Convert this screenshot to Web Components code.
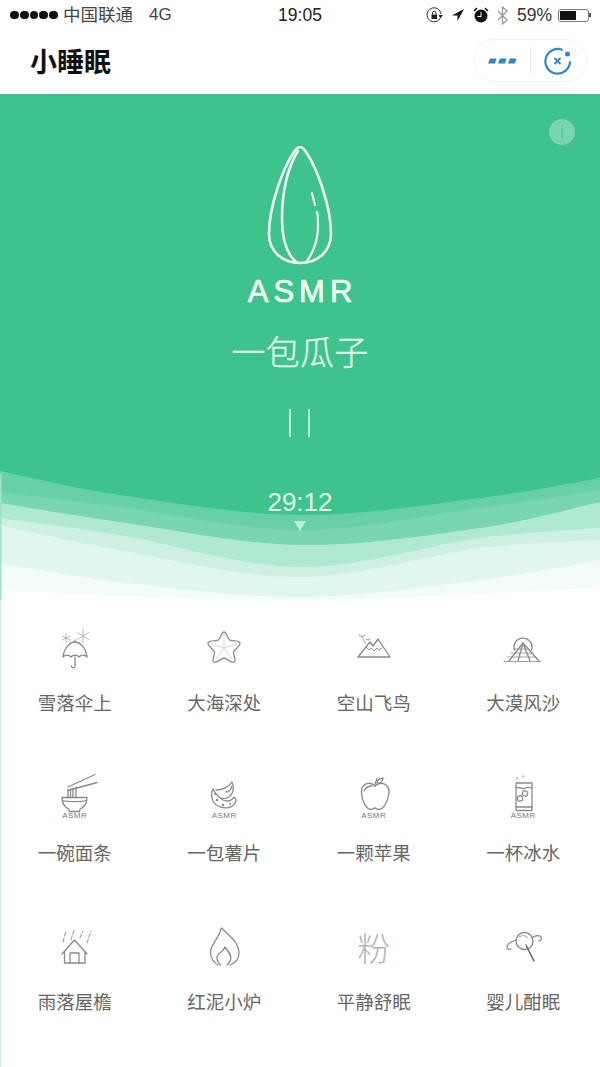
<!DOCTYPE html>
<html lang="zh">
<head>
<meta charset="utf-8">
<title>小睡眠</title>
<style>
  html, body { margin: 0; padding: 0; background: #fff; }
  body {
    width: 600px;
    height: 1067px;
    overflow: hidden;
    font-family: "Liberation Sans", "Noto Sans CJK SC", sans-serif;
    display: flex;
    flex-direction: column;
  }
</style>
</head>
<body>
<status-bar></status-bar>
<nav-bar>小睡眠</nav-bar>
<player-hero name="一包瓜子" time="29:12"></player-hero>
<sound-grid>
  <sound-item label="雪落伞上" icon="umbrella"></sound-item>
  <sound-item label="大海深处" icon="star"></sound-item>
  <sound-item label="空山飞鸟" icon="mountain"></sound-item>
  <sound-item label="大漠风沙" icon="desert"></sound-item>
  <sound-item label="一碗面条" icon="noodles"></sound-item>
  <sound-item label="一包薯片" icon="chips"></sound-item>
  <sound-item label="一颗苹果" icon="apple"></sound-item>
  <sound-item label="一杯冰水" icon="water"></sound-item>
  <sound-item label="雨落屋檐" icon="house"></sound-item>
  <sound-item label="红泥小炉" icon="flame"></sound-item>
  <sound-item label="平静舒眠" icon="pink"></sound-item>
  <sound-item label="婴儿酣眠" icon="rattle"></sound-item>
</sound-grid>
<script>
const ICONS = {
  umbrella: `<path d="M18 31c1-9 7-15 12-15s11 6 12 15c-2-2.500-6-2.500-8 0-2-2.500-6-2.500-8 0-2-2.500-6-2.500-8 0z"/><path d="M30 14v2M30 31v9c0 2.500-3.500 2.500-3.500 0"/>
    <g stroke-width=".8" stroke="#aaa"><path d="M21 7.500v9M17 10l8 4M25 10l-8 4"/><path d="M38 3v14M32 6.500l12 7M44 6.500l-12 7"/></g>`,
  star: `<path d="M30 6c2 0 4 7 5.500 8s9.500.5 10.500 3-6 7-6.500 9 3 8 1 10-8.500-4-10.500-4-8.500 6-10.500 4 1.500-8 1-10-7.500-6.500-6.500-9 9-2 10.500-3 3.500-8 5.500-8z"/>
    <path stroke="#bbb" stroke-dasharray="1 1.500" stroke-width=".8" d="M30 9v13M30 22l8 11M30 22l-8 11M30 22l13-4M30 22l-13-4"/>`,
  mountain: `<path d="M14 31l12-15 3 4 5-7 12 18z"/><path d="M22 21l3 3 2-2 3 3 3-3 2 2 3-2" stroke-width=".9"/>
    <path d="M15 9l3 2 3-2M22 13l2 1 2-1" stroke-width=".9"/><path d="M18 11l4 7" stroke-width=".7"/>`,
  desert: `<path d="M21.500 24a9 9 0 1 1 17 0"/><path d="M16 35l14-18 16 18"/><path d="M25 35l5-18 7 18"/>
    <path stroke-width=".8" d="M11 35.500h37M14 31h29M18 27h22M21 23h15"/>`,
  noodles: `<path d="M17 21.500h25c0 6-3.500 10-7 11.500l-.5 2.500h-10l-.5-2.500c-3.500-1.500-7-5.500-7-11.500z"/><path d="M18 24.500c4 1.500 19 1.500 23 0"/>
    <path d="M23 11L50 -1.500M23 14.500L52 6.500"/><path d="M23 14v7.500M25.500 13v8.500M28 12v9.500M31 11v10.500"/>`,
  chips: `<path d="M19 13c-3 6-1 14 5 17 6 3 15 3 18-5 0-1-1-3-2-4-2 4-7 5-11 3-5-3-8-7-10-11z"/>
    <path d="M22 14c6 0 13-3 16-8 3 6 1 12-3 15-3 2-5 2-7 1"/><path d="M32 16c3 0 5-3 6-6"/>
    <g stroke="none" fill="currentColor"><circle cx="23" cy="24" r="1.300"/><circle cx="29" cy="29" r="1.300"/><circle cx="36" cy="28" r="1"/><circle cx="21" cy="18" r="1"/></g>`,
  apple: `<path d="M31 10C26 5 17 7 17.500 17 18 26 23 33.500 27 33.500c2 0 2.500-1.500 4-1.500s2 1.500 4 1.500c4 0 9-7.500 10-16.500.5-10-9-12-14-7z"/>
    <path d="M31 10c0-3 1-5 2-7.500"/><path d="M33 7c0-3 3-5 6-5 0 3-2 6-6 5z"/><path d="M20 15c2-4 5-5 8-5"/>`,
  water: `<path d="M23 7h16v27.500H23z"/><path d="M23 31h16"/><path d="M23 12c4-2 6 2 9 0 2-1 4-1 7 0"/>
    <rect x="29.500" y="15" width="5" height="5" rx="1.500" transform="rotate(20 32 17.500)"/><rect x="24.500" y="20" width="5" height="5" rx="1.500" transform="rotate(-15 27 22.500)"/>
    <path d="M24 2v.5M30 0v.5" stroke-width="1.300"/>`,
  house: `<path d="M17 29l12.500-14L42 29M19.500 27v11H40V27"/><path d="M25 38v-10h9v10"/>
    <path stroke-width=".9" stroke-dasharray="4 2" d="M18 17l3-11M26 15l3-10M35 13l3-7M42 18l4-12"/>`,
  flame: `<path d="M24 40c-4-2-7.500-7-7.500-13 0-7 7.500-12 11-24C35 10 45 18 45 28c0 6-4 10-9 12"/>
    <path d="M26.500 40c-4.500-4-4.500-10-.5-12 2-1 3-2 5-6 4 5 7 9 5.500 13-.5 2-2.500 4-3.500 5"/>`,
  rattle: `<circle cx="31.500" cy="16" r="8.500"/><path d="M33 20l8 16" stroke-width="1.500" stroke="#666"/><path d="M26 12c3-2 7-2 9 1" stroke-width=".8"/><path d="M23 15c-3 1-9 3-9 7 0 2 2 3 4 2"/><path d="M39 13c3-3 8-3 9-1s0 4-2 4"/>`
};

const TAGGED = ['noodles', 'chips', 'apple', 'water'];

// smooth curve through the five heights measured along the wave
function waveBottom(ys) {
  const xs = [0, 120, 300, 480, 600];
  const pts = xs.map((x, i) => [x, ys[i]]);
  let d = `M0 0H600V${ys[4]}`;
  for (let i = 4; i > 0; i--) {
    const p0 = pts[Math.min(i + 1, 4)], p1 = pts[i], p2 = pts[i - 1], p3 = pts[Math.max(i - 2, 0)];
    const c1 = [p1[0] + (p2[0] - p0[0]) / 6, p1[1] + (p2[1] - p0[1]) / 6];
    const c2 = [p2[0] - (p3[0] - p1[0]) / 6, p2[1] - (p3[1] - p1[1]) / 6];
    d += `C${c1[0]} ${c1[1]} ${c2[0]} ${c2[1]} ${p2[0]} ${p2[1]}`;
  }
  return d + 'Z';
}

const WAVES = [
  ['#f4fcf9', [496, 502, 506, 500, 493]],
  ['#e0f6ee', [469, 488, 503, 486, 466]],
  ['#cdf0e3', [431, 456, 483, 454, 446]],
  ['#b1e8d2', [424, 441, 473, 444, 434]],
  ['#79d6b1', [409, 428, 451, 434, 408]],
  ['#68d0a6', [398, 413, 436, 414, 396]],
  ['#3fc38c', [377, 401, 421, 404, 384]]
];

class StatusBar extends HTMLElement {
  constructor() {
    super();
    this.attachShadow({ mode: 'open' });
  }

  connectedCallback() {
    this.shadowRoot.innerHTML = `
      <style>
        :host { display: flex; align-items: center; justify-content: space-between; height: 30px; padding: 0 9px 0 10px; color: #333; position: relative; flex: none; line-height: 20px; }
        .side { display: flex; align-items: center; }
        .dots { display: flex; gap: 1px; margin-right: 5px; }
        .dots i { width: 8.800px; height: 8.800px; border-radius: 50%; background: #111; }
        .carrier { font-size: 17.500px; color: #444; }
        .net { margin-left: 16px; font-size: 17px; color: #444; }
        .clock { position: absolute; left: 0; right: 0; text-align: center; font-size: 17.500px; color: #222; }
        .right { gap: 8px; color: #333; }
        svg { display: block; }
        .pct { font-size: 17.500px; margin-left: 1px; }
        .battery { width: 31px; height: 13px; border: 1px solid #777; border-radius: 3px; box-sizing: border-box; padding: 1px; margin-left: -2px; }
        .battery b { display: block; width: 59%; height: 100%; background: #111; }
        .tip { width: 2px; height: 4px; background: #555; margin-left: -8px; }
      </style>
      <div class="side">
        <div class="dots"><i></i><i></i><i></i><i></i><i></i></div>
        <span class="carrier">中国联通</span><span class="net">4G</span>
      </div>
      <div class="clock">19:05</div>
      <div class="side right">
        <svg width="17" height="17" viewBox="0 0 17 17" fill="none" stroke="#222" stroke-width="1"><path d="M14.500 10.500A7 7 0 1 1 15 7"/><path d="M13 8l1.500 2.500L16.500 8" fill="#222"/><rect x="5.500" y="7.500" width="5.500" height="4.500" fill="#222" stroke="none"/><path d="M6.500 7.500V6a1.700 1.700 0 0 1 3.500 0v1.500"/></svg>
        <svg width="14" height="14" viewBox="0 0 14 14" fill="#111"><path d="M13 1L6.500 13V7.500H1z"/></svg>
        <svg width="16" height="16" viewBox="0 0 16 16"><circle cx="8" cy="9" r="6.500" fill="#111"/><path d="M8 5v4.500H4.500" fill="none" stroke="#fff" stroke-width="1"/><path d="M1 4l3-3M15 4l-3-3" stroke="#111" stroke-width="1.500"/></svg>
        <svg width="11" height="19" viewBox="0 0 11 19" fill="none" stroke="#999" stroke-width="1.300"><path d="M1 5l9 9-4.500 4V1L10 5 1 14"/></svg>
        <span class="pct">59%</span>
        <div class="battery"><b></b></div><div class="tip"></div>
      </div>
    `;
  }
}

class NavBar extends HTMLElement {
  constructor() {
    super();
    this.attachShadow({ mode: 'open' });
  }

  connectedCallback() {
    this.shadowRoot.innerHTML = `
      <style>
        :host { display: flex; align-items: center; justify-content: space-between; height: 64px; padding: 0 13px 0 30px; flex: none; box-sizing: border-box; }
        .title { font-size: 27px; font-weight: 700; color: #111; margin-bottom: 4px; }
        .capsule { display: flex; align-items: center; width: 114px; height: 43px; box-sizing: border-box; border: 1px solid #f1f3f3; border-radius: 22px; margin-bottom: 3px; }
        .part { flex: 1; display: flex; align-items: center; justify-content: center; height: 100%; }
        .sep { width: 1px; height: 27px; background: #e6ecee; }
      </style>
      <div class="title"><slot></slot></div>
      <div class="capsule">
        <div class="part"><svg width="30" height="8" viewBox="0 0 30 8" fill="#2f86c4"><path d="M3 1.500h6.500l-1.500 5H1zM13 1.500h6.500l-1.500 5h-7zM23 1.500h6.500l-1.500 5h-7z"/></svg></div>
        <div class="sep"></div>
        <div class="part"><svg width="30" height="30" viewBox="0 0 30 30" fill="none" stroke="#2f86c4" stroke-width="2.200"><path d="M27 15.500A12.300 12.300 0 1 1 19.500 4"/><path d="M11.500 12l6 6M17.500 12l-6 6" stroke-width="1.800"/><circle cx="24.500" cy="8" r="2.500" fill="#2f86c4" stroke="none"/></svg></div>
      </div>
    `;
  }
}

class PlayerHero extends HTMLElement {
  constructor() {
    super();
    this.attachShadow({ mode: 'open' });
  }

  connectedCallback() {
    const name = this.getAttribute('name') || '';
    const time = this.getAttribute('time') || '';
    const layers = WAVES.map(([fill, ys]) => `<path fill="${fill}" d="${waveBottom(ys.map(y => y))}"/>`).join('');
    this.shadowRoot.innerHTML = `
      <style>
        :host { display: flex; flex-direction: column; align-items: center; position: relative; height: 506px; flex: none; color: #e6f8f0; box-sizing: border-box; padding-top: 52px; }
        .waves { position: absolute; left: 0; top: 0; width: 600px; height: 506px; display: block; }
        .content { position: relative; display: flex; flex-direction: column; align-items: center; }
        .seed { display: block; }
        .asmr { font-size: 31px; letter-spacing: 5px; padding-left: 5px; line-height: 36px; margin-top: 8px; -webkit-text-stroke: .7px #eefaf5; color: #eefaf5; }
        .name { font-family: "Noto Sans CJK SC", sans-serif; font-weight: 300; font-size: 34px; line-height: 44px; margin-top: 19px; letter-spacing: .3px; -webkit-text-stroke: .3px #e6f8f0; }
        .pause { display: flex; gap: 17px; margin-top: 36px; }
        .pause i { width: 2px; height: 28px; background: #bdeeda; }
        .time { font-size: 26px; line-height: 30px; margin-top: 50px; color: #dff6ec; }
        .arrow { width: 0; height: 0; border: 6px solid transparent; border-top: 10px solid #bfeeda; border-bottom: 0; margin-top: 4px; }
        .info { position: absolute; top: 25px; right: 25px; width: 26px; height: 26px; border-radius: 50%; background: #7bd4b1; color: #4cc896; font: 400 18px/26px "Liberation Sans", sans-serif; text-align: center; }
      </style>
      <svg class="waves" viewBox="0 0 600 506">
        <rect width="600" height="506" fill="#fff"/>
        ${layers}
        <rect x="0" y="380" width="1.500" height="126" fill="#9fe3c8"/>
      </svg>
      <div class="info">i</div>
      <div class="content">
        <svg class="seed" width="66" height="120" viewBox="0 0 66 120" fill="none" stroke="#eefaf5" stroke-width="2.600" stroke-linecap="round" stroke-linejoin="round">
          <path d="M33 1c2 0 4 2 6 5C50 22 64 60 64 88c0 18-14 29-31 29S2 106 2 88C2 60 16 22 27 6c2-3 4-5 6-5z"/>
          <path d="M31 5C20 22 15 48 15 72c0 20 5 36 14 44"/>
          <path d="M40 115c7-10 11-20 11-35 0-5 0-10-1-14M48 62M45 47l3 12" stroke-width="2.200"/>
        </svg>
        <div class="asmr">ASMR</div>
        <div class="name">${name}</div>
        <div class="pause"><i></i><i></i></div>
        <div class="time">${time}</div>
        <div class="arrow"></div>
      </div>
    `;
  }
}

class SoundGrid extends HTMLElement {
  constructor() {
    super();
    this.attachShadow({ mode: 'open' });
  }

  connectedCallback() {
    this.shadowRoot.innerHTML = `
      <style>
        :host { display: grid; grid-template-columns: repeat(4, 149.500px); grid-auto-rows: 149.500px; padding-top: 26px; flex: 1; box-shadow: inset 1px 0 #cdeee3; }
      </style>
      <slot></slot>
    `;
  }
}

class SoundItem extends HTMLElement {
  constructor() {
    super();
    this.attachShadow({ mode: 'open' });
  }

  connectedCallback() {
    const label = this.getAttribute('label') || '';
    const icon = this.getAttribute('icon');
    const tagged = TAGGED.includes(icon);
    const tag = tagged ? '<div class="tag">ASMR</div>' : '';
    const h = tagged ? 35 : 44;
    const art = icon === 'pink'
      ? '<div class="glyph">粉</div>'
      : `<svg width="60" height="${h}" viewBox="0 0 60 ${h}" fill="none" stroke="currentColor" stroke-width="1.300" stroke-linecap="round" stroke-linejoin="round">${ICONS[icon]}</svg>`;
    this.shadowRoot.innerHTML = `
      <style>
        :host { display: flex; flex-direction: column; align-items: center; color: #8a8a8a; }
        .art { height: 62px; display: flex; flex-direction: column; align-items: center; justify-content: flex-start; }
        svg { display: block; overflow: visible; }
        .tag { font-size: 8px; letter-spacing: .5px; line-height: 9px; color: #777; }
        .glyph { font-family: "Noto Sans CJK SC", sans-serif; font-weight: 300; font-size: 33px; line-height: 44px; color: #b5b5b5; }
        .label { font-family: "Noto Sans CJK SC", sans-serif; font-size: 18.500px; line-height: 26px; color: #666; margin-top: 1px; }
      </style>
      <div class="art">${art}${tag}</div>
      <div class="label">${label}</div>
    `;
  }
}

customElements.define('status-bar', StatusBar);
customElements.define('nav-bar', NavBar);
customElements.define('player-hero', PlayerHero);
customElements.define('sound-grid', SoundGrid);
customElements.define('sound-item', SoundItem);
</script>
</body>
</html>
